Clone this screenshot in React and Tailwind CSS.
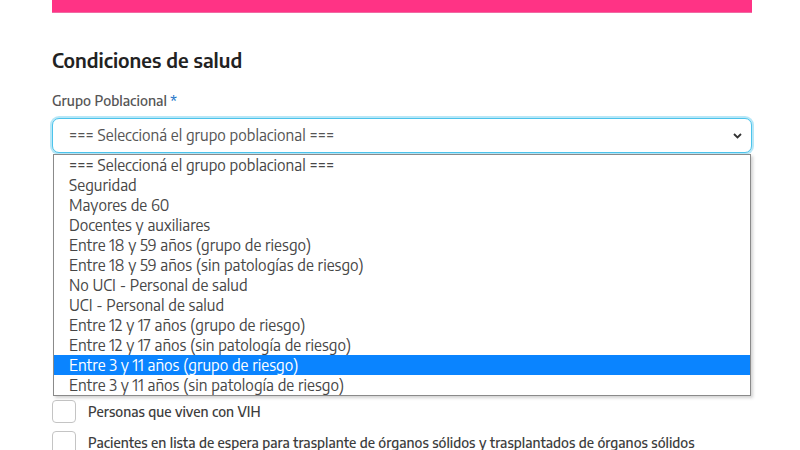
import React from "react";

const options = [
  "=== Seleccioná el grupo poblacional ===",
  "Seguridad",
  "Mayores de 60",
  "Docentes y auxiliares",
  "Entre 18 y 59 años (grupo de riesgo)",
  "Entre 18 y 59 años (sin patologías de riesgo)",
  "No UCI - Personal de salud",
  "UCI - Personal de salud",
  "Entre 12 y 17 años (grupo de riesgo)",
  "Entre 12 y 17 años (sin patología de riesgo)",
  "Entre 3 y 11 años (grupo de riesgo)",
  "Entre 3 y 11 años (sin patología de riesgo)",
];

const conditions = [
  "Personas que viven con VIH",
  "Pacientes en lista de espera para trasplante de órganos sólidos y trasplantados de órganos sólidos",
];

function Checkbox({ label }) {
  return (
    <div className="flex h-[31px] items-start gap-[12px]">
      <div className="h-[23px] w-[24px] shrink-0 rounded-[4px] border border-[#c4c4c4] bg-white" />
      <span className="pt-[3px] text-[13.8px] font-medium leading-[17px] text-[#3d3d3d]">{label}</span>
    </div>
  );
}

export default function App() {
  return (
    <div className="h-[450px] w-[800px] overflow-hidden bg-white font-['Encode_Sans',_'Noto_Sans',_sans-serif]">
      <div className="mx-[52px] w-[700px]">
        <div className="h-[13px] border-b border-[#f06aa3] bg-[#ff3385]" />
        <h2 className="mt-[35px] text-[19.7px] font-semibold leading-[24px] text-[#222]">Condiciones de salud</h2>
        <div className="mt-[20px] text-[14px] font-medium leading-[17px] text-[#555]">
          Grupo Poblacional <span className="text-[#1a73c8]">*</span>
        </div>
        <div className="relative mt-[9px]">
          <div className="flex h-[35px] items-center justify-between rounded-[7px] border border-[#4cc3eb] bg-white pl-[16px] pr-[9px] shadow-[0_0_0_2px_rgba(76,195,235,0.4)]">
            <span className="text-[15.3px] text-[#555]">=== Seleccioná el grupo poblacional ===</span>
            <svg width="9" height="6" viewBox="0 0 9 6" className="mt-[1px]">
              <path d="M1 1 L4.5 4.5 L8 1" fill="none" stroke="#333" strokeWidth="1.8" />
            </svg>
          </div>
          <div className="absolute left-[1px] right-[1px] top-[36px] z-10 border border-[#8a8a8a] bg-white shadow-[2px_2px_3px_rgba(0,0,0,0.18)]">
            {options.map((o, i) => (
              <div
                key={o}
                className={
                  i === 10
                    ? "h-[20px] bg-[#0a84ff] pl-[15px] text-[15.3px] leading-[20px] text-white"
                    : "h-[20px] pl-[15px] text-[15.3px] leading-[20px] text-[#474747]"
                }
              >
                {o}
              </div>
            ))}
          </div>
          <div className="mt-[247px] flex flex-col">
            {conditions.map((c) => (
              <Checkbox key={c} label={c} />
            ))}
          </div>
        </div>
      </div>
    </div>
  );
}
